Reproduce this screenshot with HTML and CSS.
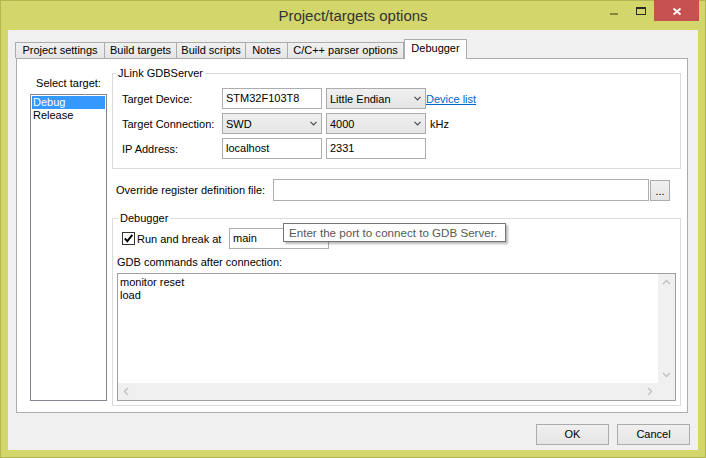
FILE: index.html
```html
<!DOCTYPE html>
<html lang="en">
<head>
<meta charset="utf-8">
<title>Project/targets options</title>
<link rel="stylesheet" href="styles.css">
</head>
<body>
<div class="window">
  <header class="titlebar">
    <div class="title">Project/targets options</div>
    <div class="controls">
      <span class="ctl ctl-min"><svg width="26" height="21" viewBox="0 0 26 21"><rect x="9" y="13" width="8" height="2" fill="#85873f"/></svg></span>
      <span class="ctl ctl-max"><svg width="27" height="21" viewBox="0 0 27 21"><rect x="9.5" y="7.5" width="9" height="7" fill="none" stroke="#2a2a2a"/><rect x="9" y="7" width="10" height="2" fill="#2a2a2a"/></svg></span>
      <span class="ctl ctl-close"><svg width="45" height="21" viewBox="0 0 45 21"><path d="M19.5 8.5 L26.5 14.5 M26.5 8.5 L19.5 14.5" stroke="#fff" stroke-width="1.8" fill="none"/></svg></span>
    </div>
  </header>

  <main class="client">
    <nav class="tabs">
      <div class="tab tab-project">Project settings</div>
      <div class="tab tab-targets">Build targets</div>
      <div class="tab tab-scripts">Build scripts</div>
      <div class="tab tab-notes">Notes</div>
      <div class="tab tab-parser">C/C++ parser options</div>
      <div class="tab tab-debugger active">Debugger</div>
    </nav>

    <section class="panel">
      <div class="targets">
        <div class="targets-label">Select target:</div>
        <div class="listbox">
          <div class="item selected">Debug</div>
          <div class="item">Release</div>
        </div>
      </div>

      <div class="settings">
        <fieldset class="group">
          <legend class="legend-jlink">JLink GDBServer</legend>
          <div class="jlink-grid">
            <div class="field-label">Target Device:</div>
            <div class="textbox">STM32F103T8</div>
            <div class="combo"><span>Little Endian</span><svg class="chev" width="7" height="5" viewBox="0 0 7 5"><path d="M0.5 0.8 L3.5 3.8 L6.5 0.8" fill="none" stroke="#4a4a4a" stroke-width="1.2"/></svg></div>
            <a class="link" href="#">Device list</a>

            <div class="field-label">Target Connection:</div>
            <div class="combo"><span>SWD</span><svg class="chev" width="7" height="5" viewBox="0 0 7 5"><path d="M0.5 0.8 L3.5 3.8 L6.5 0.8" fill="none" stroke="#4a4a4a" stroke-width="1.2"/></svg></div>
            <div class="combo"><span>4000</span><svg class="chev" width="7" height="5" viewBox="0 0 7 5"><path d="M0.5 0.8 L3.5 3.8 L6.5 0.8" fill="none" stroke="#4a4a4a" stroke-width="1.2"/></svg></div>
            <div class="unit">kHz</div>

            <div class="field-label">IP Address:</div>
            <div class="textbox">localhost</div>
            <div class="textbox">2331</div>
            <div></div>
          </div>
        </fieldset>

        <div class="override">
          <div class="override-label">Override register definition file:</div>
          <div class="textbox override-input"></div>
          <div class="button browse">...</div>
        </div>

        <fieldset class="group group-debugger">
          <legend class="legend-debugger">Debugger</legend>
          <div class="debugger-body">
            <div class="run-row">
              <span class="checkbox"><svg width="11" height="11" viewBox="0 0 11 11"><path d="M1.8 5.4 L4.3 8.2 L9.3 1.8" fill="none" stroke="#000" stroke-width="1.9"/></svg></span>
              <span class="run-label">Run and break at</span>
              <span class="main-wrap">
                <span class="textbox main-input">main</span>
                <span class="tooltip">Enter the port to connect to GDB Server.</span>
              </span>
            </div>
            <div class="gdb-label">GDB commands after connection:</div>
            <div class="textarea">
              <div class="textarea-text">monitor reset<br>load</div>
              <div class="vscroll">
                <svg width="17" height="17" viewBox="0 0 17 17"><path d="M5 10 L8.5 6.5 L12 10" fill="none" stroke="#c2c2c2" stroke-width="1.5"/></svg>
                <svg width="17" height="17" viewBox="0 0 17 17"><path d="M5 7 L8.5 10.5 L12 7" fill="none" stroke="#c2c2c2" stroke-width="1.5"/></svg>
              </div>
              <div class="hscroll">
                <svg width="17" height="17" viewBox="0 0 17 17"><path d="M10 5 L6.5 8.5 L10 12" fill="none" stroke="#c2c2c2" stroke-width="1.5"/></svg>
                <svg width="17" height="17" viewBox="0 0 17 17"><path d="M7 5 L10.5 8.5 L7 12" fill="none" stroke="#c2c2c2" stroke-width="1.5"/></svg>
              </div>
              <div class="corner"></div>
            </div>
          </div>
        </fieldset>
      </div>
    </section>

    <footer class="actions">
      <div class="button btn">OK</div>
      <div class="button btn">Cancel</div>
    </footer>
  </main>
</div>
</body>
</html>
```

FILE: styles.css
```css
* {
  box-sizing: border-box;
}

html,
body {
  margin: 0;
  padding: 0;
}

body {
  width: 706px;
  height: 458px;
  overflow: hidden;
  font-family: "Liberation Sans", Arial, sans-serif;
  font-size: 11px;
  color: #000;
  background: #d2d66b;
}

.window {
  width: 706px;
  height: 458px;
  border: 1px solid #b3b650;
  background: #d2d66b;
  display: flex;
  flex-direction: column;
}

/* title bar */
.titlebar {
  height: 29px;
  display: grid;
  grid-template-columns: 1fr auto 1fr;
  align-items: start;
}

.title {
  grid-column: 2;
  font-size: 15px;
  line-height: 29px;
  color: #333;
  white-space: nowrap;
}

.controls {
  grid-column: 3;
  justify-self: end;
  display: flex;
  margin-top: -1px;
  margin-right: 6px;
}

.ctl {
  display: block;
  height: 21px;
}

.ctl svg {
  display: block;
}

.ctl-close {
  background: #c75050;
}

/* client area */
.client {
  flex: 1;
  margin: 0 7px 7px;
  background: #f0f0f0;
  display: flex;
  flex-direction: column;
  padding-top: 9px;
}

.tabs {
  display: flex;
  align-items: flex-end;
  height: 20px;
  margin-bottom: -1px;
  padding-left: 7px;
  position: relative;
  z-index: 1;
}

.tab {
  height: 16px;
  margin-bottom: 1px;
  margin-right: -1px;
  border: 1px solid #acacac;
  border-bottom: none;
  background: linear-gradient(#f0f0f0, #e5e5e5);
  text-align: center;
  line-height: 15px;
  white-space: nowrap;
}

.tab-project { width: 90px; }
.tab-targets { width: 73px; }
.tab-scripts { width: 70px; }
.tab-notes { width: 43px; }
.tab-parser { width: 117px; }

.tab.active {
  width: 63px;
  height: 20px;
  margin-bottom: 0;
  margin-left: 1px;
  background: #fff;
  line-height: 16px;
}

.panel {
  margin: 0 10px 0 8px;
  height: 355px;
  background: #fff;
  border: 1px solid #acacac;
  display: flex;
  padding: 0 6px 0 13px;
}

/* target list */
.targets {
  width: 77px;
  padding-top: 17px;
  display: flex;
  flex-direction: column;
}

.targets-label {
  line-height: 14px;
  text-align: center;
  margin-bottom: 4px;
  white-space: nowrap;
}

.listbox {
  height: 307px;
  border: 1px solid #828790;
  padding: 1px;
}

.item {
  height: 13px;
  line-height: 13px;
  padding-left: 1px;
}

.item.selected {
  background: #3399ff;
  color: #fff;
}

/* settings column */
.settings {
  width: 569px;
  margin-left: 5px;
  padding-top: 7px;
  display: flex;
  flex-direction: column;
}

.group {
  margin: 0;
  padding: 0;
  border: 1px solid #dcdcdc;
  min-width: 0;
}

.group legend {
  padding: 0 2px;
  line-height: 15px;
}

.legend-jlink {
  margin-left: 3px;
}

.legend-debugger {
  margin-left: 5px;
}

.jlink-grid {
  display: grid;
  grid-template-columns: 100px 104px 100px auto;
  grid-auto-rows: 21px;
  row-gap: 4px;
  padding: 7px 0 9px 9px;
  align-items: center;
}

.field-label {
  white-space: nowrap;
}

.textbox {
  display: block;
  width: 100px;
  height: 21px;
  border: 1px solid #abadb3;
  background: #fff;
  padding: 0 3px;
  line-height: 19px;
  white-space: nowrap;
}

.combo {
  width: 100px;
  height: 21px;
  border: 1px solid #acacac;
  background: linear-gradient(#f0f0f0, #e5e5e5);
  display: flex;
  align-items: center;
  justify-content: space-between;
  padding: 0 4px 0 3px;
}

.chev {
  display: block;
}

.link {
  color: #0066cc;
  text-decoration: underline;
  white-space: nowrap;
}

.unit {
  padding-left: 4px;
}

/* override row */
.override {
  margin-top: 10px;
  height: 22px;
  display: flex;
  align-items: center;
  padding-left: 4px;
}

.override-label {
  width: 157px;
  white-space: nowrap;
}

.override-input {
  width: 376px;
  height: 22px;
}

.button {
  border: 1px solid #acacac;
  background: linear-gradient(#f0f0f0, #e5e5e5);
  text-align: center;
}

.browse {
  width: 20px;
  height: 21px;
  margin-left: 1px;
  line-height: 21px;
}

/* debugger group */
.group-debugger {
  margin-top: 10px;
}

.debugger-body {
  padding: 2px 4px 4px;
}

.run-row {
  display: flex;
  align-items: center;
  height: 21px;
  padding-left: 5px;
}

.checkbox {
  width: 13px;
  height: 13px;
  border: 1px solid #333;
  background: #fff;
  display: block;
}

.checkbox svg {
  display: block;
}

.run-label {
  width: 92px;
  margin-left: 2px;
  white-space: nowrap;
}

.main-wrap {
  position: relative;
  display: block;
}

.main-input {
  width: 100px;
}

.tooltip {
  position: absolute;
  left: 54px;
  top: -5px;
  width: 223px;
  height: 19px;
  border: 1px solid #767676;
  background: #fff;
  color: #575757;
  padding: 0 5px;
  font-size: 11.6px;
  line-height: 17px;
  white-space: nowrap;
  box-shadow: 2px 2px 2px rgba(0, 0, 0, 0.28);
}

.gdb-label {
  margin-top: 6px;
  line-height: 14px;
}

.textarea {
  margin-top: 4px;
  height: 128px;
  border: 1px solid #a0a0a0;
  background: #fff;
  display: grid;
  grid-template-columns: 1fr 17px;
  grid-template-rows: 1fr 17px;
}

.textarea-text {
  padding: 2px 0 0 2px;
  line-height: 13px;
}

.vscroll,
.hscroll,
.corner {
  background: #f0f0f0;
}

.vscroll {
  display: flex;
  flex-direction: column;
  justify-content: space-between;
}

.hscroll {
  display: flex;
  justify-content: space-between;
}

.vscroll svg,
.hscroll svg {
  display: block;
}

/* bottom buttons */
.actions {
  display: flex;
  justify-content: flex-end;
  gap: 8px;
  margin-top: 11px;
  padding-right: 8px;
}

.btn {
  width: 73px;
  height: 21px;
  line-height: 19px;
}
```
